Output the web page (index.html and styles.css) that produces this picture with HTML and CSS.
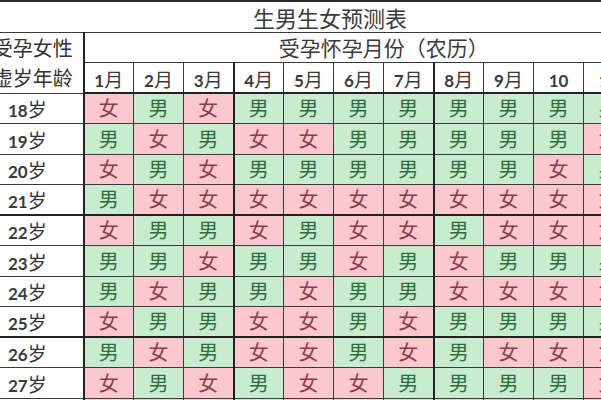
FILE: index.html
```html
<!DOCTYPE html>
<html lang="zh">
<head>
<meta charset="utf-8">
<title>生男生女预测表</title>
<link rel="stylesheet" href="styles.css">
</head>
<body>
<table class="chart">
<colgroup>
<col class="c-label">
<col class="c-m"><col class="c-m"><col class="c-m"><col class="c-m"><col class="c-m"><col class="c-m">
<col class="c-m"><col class="c-m"><col class="c-m"><col class="c-m"><col class="c-m"><col class="c-m">
</colgroup>
<tr class="r-title"><td colspan="13" class="title">生男生女预测表</td></tr>
<tr class="r-sub"><td rowspan="2" class="label-head">受孕女性<br>虚岁年龄</td><td colspan="12" class="sub">受孕怀孕月份（农历）</td></tr>
<tr class="r-month">
<td class="month"><b>1</b>月</td><td class="month"><b>2</b>月</td><td class="month"><b>3</b>月</td><td class="month"><b>4</b>月</td><td class="month"><b>5</b>月</td><td class="month"><b>6</b>月</td><td class="month"><b>7</b>月</td><td class="month"><b>8</b>月</td><td class="month"><b>9</b>月</td><td class="month"><b>10</b></td><td class="month"><b>11</b></td><td class="month"><b>12</b></td>
</tr>
<tr class="r-data"><th class="age"><b>18</b>岁</th><td class="g">女</td><td class="b">男</td><td class="g">女</td><td class="b">男</td><td class="b">男</td><td class="b">男</td><td class="b">男</td><td class="b">男</td><td class="b">男</td><td class="b">男</td><td class="b">男</td><td class="b">男</td></tr>
<tr class="r-data"><th class="age"><b>19</b>岁</th><td class="b">男</td><td class="g">女</td><td class="b">男</td><td class="g">女</td><td class="g">女</td><td class="b">男</td><td class="b">男</td><td class="b">男</td><td class="b">男</td><td class="b">男</td><td class="g">女</td><td class="b">男</td></tr>
<tr class="r-data"><th class="age"><b>20</b>岁</th><td class="g">女</td><td class="b">男</td><td class="g">女</td><td class="b">男</td><td class="b">男</td><td class="b">男</td><td class="b">男</td><td class="b">男</td><td class="b">男</td><td class="g">女</td><td class="b">男</td><td class="b">男</td></tr>
<tr class="r-data"><th class="age"><b>21</b>岁</th><td class="b">男</td><td class="g">女</td><td class="g">女</td><td class="g">女</td><td class="g">女</td><td class="g">女</td><td class="g">女</td><td class="g">女</td><td class="g">女</td><td class="g">女</td><td class="g">女</td><td class="g">女</td></tr>
<tr class="r-data grp"><th class="age"><b>22</b>岁</th><td class="g">女</td><td class="b">男</td><td class="b">男</td><td class="g">女</td><td class="b">男</td><td class="g">女</td><td class="g">女</td><td class="b">男</td><td class="g">女</td><td class="g">女</td><td class="g">女</td><td class="g">女</td></tr>
<tr class="r-data"><th class="age"><b>23</b>岁</th><td class="b">男</td><td class="b">男</td><td class="g">女</td><td class="b">男</td><td class="b">男</td><td class="g">女</td><td class="b">男</td><td class="g">女</td><td class="b">男</td><td class="b">男</td><td class="b">男</td><td class="g">女</td></tr>
<tr class="r-data"><th class="age"><b>24</b>岁</th><td class="b">男</td><td class="g">女</td><td class="b">男</td><td class="b">男</td><td class="g">女</td><td class="b">男</td><td class="b">男</td><td class="g">女</td><td class="g">女</td><td class="g">女</td><td class="g">女</td><td class="g">女</td></tr>
<tr class="r-data"><th class="age"><b>25</b>岁</th><td class="g">女</td><td class="b">男</td><td class="b">男</td><td class="g">女</td><td class="g">女</td><td class="b">男</td><td class="g">女</td><td class="b">男</td><td class="b">男</td><td class="b">男</td><td class="b">男</td><td class="b">男</td></tr>
<tr class="r-data grp"><th class="age"><b>26</b>岁</th><td class="b">男</td><td class="g">女</td><td class="b">男</td><td class="g">女</td><td class="g">女</td><td class="b">男</td><td class="g">女</td><td class="b">男</td><td class="g">女</td><td class="g">女</td><td class="g">女</td><td class="g">女</td></tr>
<tr class="r-data"><th class="age"><b>27</b>岁</th><td class="g">女</td><td class="b">男</td><td class="g">女</td><td class="b">男</td><td class="g">女</td><td class="g">女</td><td class="b">男</td><td class="b">男</td><td class="b">男</td><td class="b">男</td><td class="g">女</td><td class="b">男</td></tr>
<tr class="r-data"><th class="age"><b>28</b>岁</th><td class="b">男</td><td class="g">女</td><td class="b">男</td><td class="b">男</td><td class="g">女</td><td class="b">男</td><td class="b">男</td><td class="g">女</td><td class="g">女</td><td class="g">女</td><td class="g">女</td><td class="g">女</td></tr>
</table>
</body>
</html>
```

FILE: styles.css
```css
html, body {
  margin: 0;
  padding: 0;
  overflow: hidden;
  background: #ffffff;
}

body {
  font-family: "Noto Sans CJK SC", "Noto Sans", sans-serif;
  color: #333333;
}

.chart {
  table-layout: fixed;
  border-collapse: collapse;
  width: 707px;
  margin-left: -24px;
  border-top: 2px solid #2a2a2a;
}

.c-label { width: 107px; }
.c-m { width: 50px; }

.chart td,
.chart th {
  border: 1px solid #3a3a3a;
  padding: 0;
  text-align: center;
  vertical-align: middle;
  font-weight: 400;
  line-height: 1;
}

.chart .r-title { height: 31px; }
.chart .r-sub { height: 30px; }
.chart .r-month { height: 30px; }
.chart .r-data { height: 30px; }
.chart .r-data:nth-child(odd) { height: 31px; }

.chart .title {
  font-size: 22px;
  color: #3a3a3a;
  padding-top: 1px;
}

.chart .sub {
  font-size: 21px;
  color: #3a3a3a;
  padding-top: 1px;
}

.chart .label-head {
  font-size: 20px;
  line-height: 30px;
  color: #333333;
  padding-left: 6px;
  border-right: 2px solid #222222;
}

.chart .month {
  font-size: 19px;
  color: #3a3a3a;
  padding-top: 2px;
}

.chart .month b,
.chart .age b {
  font-family: Lato, "Liberation Sans", sans-serif;
  font-weight: 700;
  color: #3b3b3b;
}

.chart .month b {
  font-size: 17px;
}

.chart .r-month td {
  border-bottom: 2px solid #222222;
}

.chart .age {
  text-align: left;
  padding-left: 31px;
  padding-top: 2px;
  font-size: 19px;
  color: #333333;
  background: #ffffff;
  border-right: 2px solid #222222;
}

.chart .age b {
  font-size: 17px;
}

.chart .r-data td {
  font-size: 20px;
}

.chart .r-data td.b {
  background: #c9ebd0;
  color: #2e6e3c;
}

.chart .r-data td.g {
  background: #fac8cd;
  color: #8e3a4c;
}

.chart .r-data td:nth-child(4),
.chart .r-data td:nth-child(8),
.chart .r-month td:nth-child(3),
.chart .r-month td:nth-child(7) {
  border-right: 2px solid #222222;
}

.chart .grp > th,
.chart .grp > td {
  border-top: 2px solid #222222;
}
```
